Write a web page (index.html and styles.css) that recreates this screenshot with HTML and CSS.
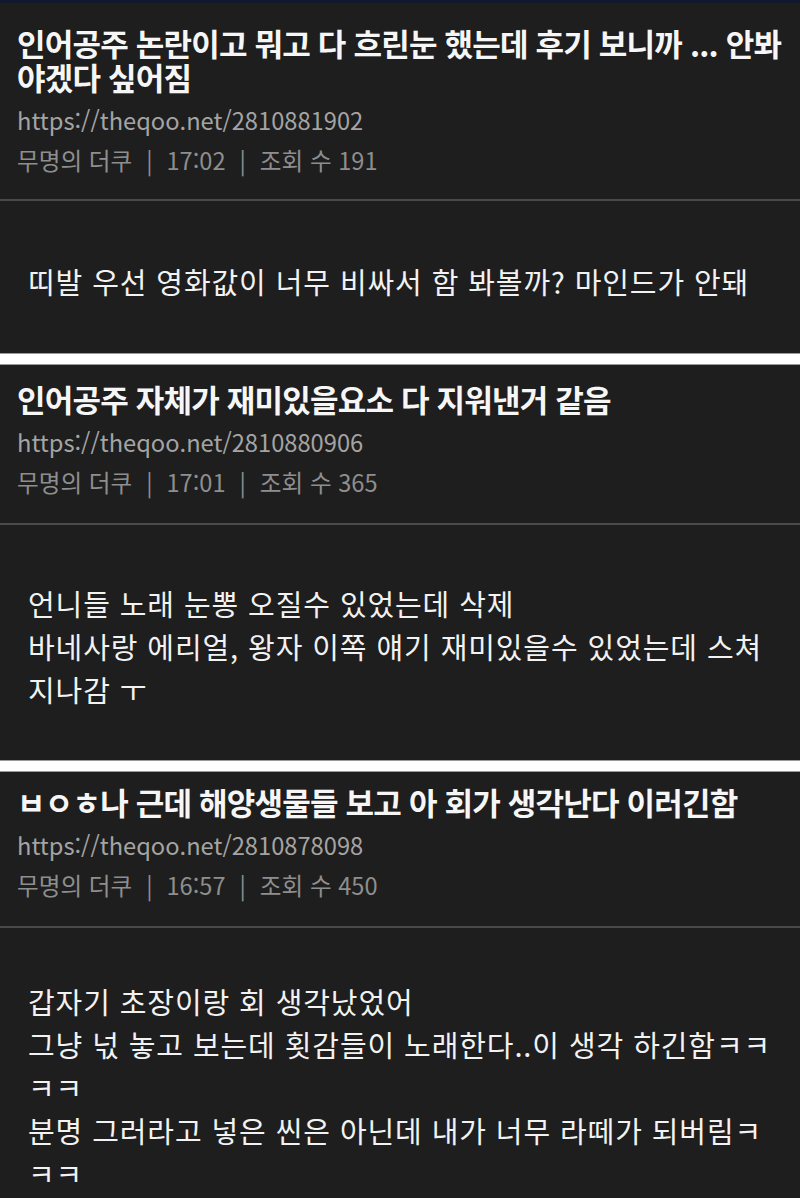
FILE: index.html
```html
<!DOCTYPE html>
<html lang="ko">
<head>
<meta charset="utf-8">
<link rel="stylesheet" href="styles.css">
</head>
<body>
<div class="topbar"></div>
<article class="card card-1">
  <header class="head">
    <h2 class="title">인어공주 논란이고 뭐고 다 흐린눈 했는데 후기 보니까 ... 안봐야겠다 싶어짐</h2>
    <div class="url">https://theqoo.net/2810881902</div>
    <div class="meta"><span>무명의 더쿠</span><span class="sep">|</span><span>17:02</span><span class="sep">|</span><span>조회 수 191</span></div>
  </header>
  <div class="body">
    <p>띠발 우선 영화값이 너무 비싸서 함 봐볼까? 마인드가 안돼</p>
  </div>
</article>
<div class="gap"></div>
<article class="card card-2">
  <header class="head">
    <h2 class="title">인어공주 자체가 재미있을요소 다 지워낸거 같음</h2>
    <div class="url">https://theqoo.net/2810880906</div>
    <div class="meta"><span>무명의 더쿠</span><span class="sep">|</span><span>17:01</span><span class="sep">|</span><span>조회 수 365</span></div>
  </header>
  <div class="body">
    <p>언니들 노래 눈뽕 오질수 있었는데 삭제<br>바네사랑 에리얼, 왕자 이쪽 얘기 재미있을수 있었는데 스쳐지나감 ㅜ</p>
  </div>
</article>
<div class="gap"></div>
<article class="card card-3">
  <header class="head">
    <h2 class="title">ㅂㅇㅎ나 근데 해양생물들 보고 아 회가 생각난다 이러긴함</h2>
    <div class="url">https://theqoo.net/2810878098</div>
    <div class="meta"><span>무명의 더쿠</span><span class="sep">|</span><span>16:57</span><span class="sep">|</span><span>조회 수 450</span></div>
  </header>
  <div class="body">
    <p>갑자기 초장이랑 회 생각났었어<br>그냥 넋 놓고 보는데 횟감들이 노래한다..이 생각 하긴함ㅋㅋㅋㅋ<br>분명 그러라고 넣은 씬은 아닌데 내가 너무 라떼가 되버림ㅋㅋㅋ</p>
  </div>
</article>
</body>
</html>
```
FILE: styles.css
```css
* { box-sizing: border-box; }
html, body {
  margin: 0;
  padding: 0;
  background: #1e1e1e;
  font-family: "Noto Sans CJK KR", "Noto Sans", sans-serif;
}
body { width: 800px; height: 1198px; overflow: hidden; }
.topbar { height: 3px; background: #101a2c; }
.card { background: #1e1e1e; }
.head { padding: 0 17px; border-bottom: 2px solid #4a4a4a; }
.card-1 .head { padding-top: 23px; padding-bottom: 19px; }
.card-2 .head { padding-top: 17px; padding-bottom: 21px; }
.card-3 .head { padding-top: 13px; padding-bottom: 21px; }
.title {
  margin: 0 0 6px;
  font-size: 31px;
  line-height: 34px;
  font-weight: 700;
  letter-spacing: -0.8px;
  color: #f6f6f6;
}
.url {
  font-size: 23.7px;
  line-height: 40px;
  color: #a4a4a4;
}
.meta {
  font-size: 23.6px;
  line-height: 40px;
  color: #8e8e8e;
  display: flex;
}
.sep { margin: 0 14px; }
.body { padding: 0 28px; }
.body p {
  margin: 0;
  font-size: 29px;
  line-height: 43px;
  letter-spacing: 0.9px;
  color: #f2f2f2;
}
.card-1 .body { height: 152px; padding-top: 59px; }
.card-2 .body { height: 235px; padding-top: 57px; }
.card-3 .body { padding-top: 52px; }
.gap {
  height: 12px;
  background: #ffffff;
  border-top: 1px solid #9a9a9a;
  border-bottom: 1px solid #9a9a9a;
}
```
